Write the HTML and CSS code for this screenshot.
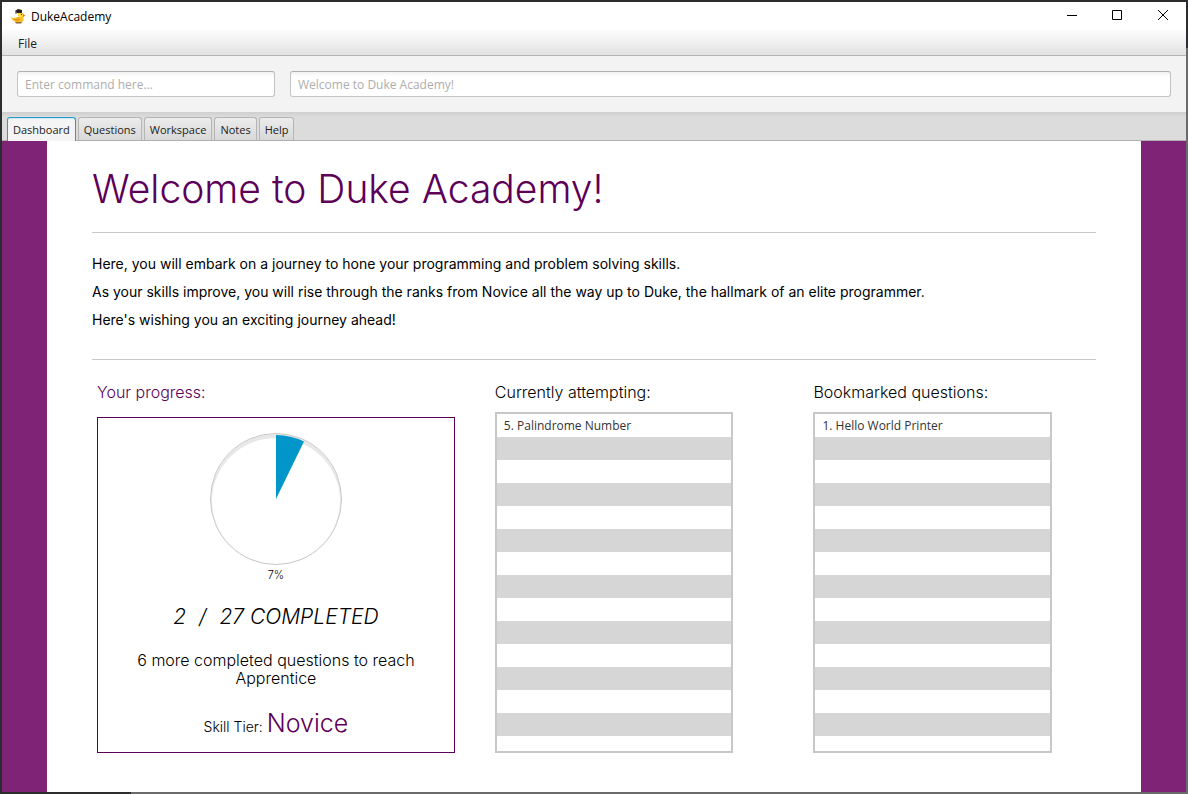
FILE: index.html
```html
<!DOCTYPE html>
<html lang="en">
<head>
<meta charset="utf-8">
<title>DukeAcademy</title>
<link rel="stylesheet" href="styles.css">
</head>
<body>
<div class="window">
  <header class="titlebar">
    <svg class="duck" viewBox="0 0 15 15" aria-hidden="true">
      <path d="M0 8L2 9Q4 9 6 8L8 8Q6 6 7 4L12 4Q14 6 12 9Q14 11 11 13L5 13Q1 12 0 8Z" fill="#f6bd2c"/>
      <path d="M2 10Q5 11 8 9L9 11Q6 13 3 11Z" fill="#e89613"/>
      <path d="M7 5Q10 3 12 6L11 8L8 8Z" fill="#ffe23b"/>
      <path d="M12 5.500L14.500 6.500L12 8Z" fill="#ed6a10"/>
      <path d="M4 13L11 13L10 14.500L5 14.500Z" fill="#8d6b39"/>
      <path d="M4 2L7 0L11 1L11 4L6 4Z" fill="#252323"/>
      <path d="M5 2L5 5" stroke="#553b2b"/>
      <rect x="10" y="5" width="1" height="1" fill="#34240e"/>
    </svg>
    <h1 class="app-name">DukeAcademy</h1>
    <div class="win-controls">
      <button class="win-btn" aria-label="Minimize"><svg viewBox="0 0 10 10"><path d="M1 5.500H11"/></svg></button>
      <button class="win-btn" aria-label="Maximize"><svg viewBox="0 0 10 10"><path d="M.5 .5H9.500V9.500H.5Z"/></svg></button>
      <button class="win-btn" aria-label="Close"><svg viewBox="0 0 10 10"><path d="M0 0L10 10M10 0L0 10"/></svg></button>
    </div>
  </header>
  <nav class="menubar"><button class="menu-item">File</button></nav>
  <div class="commands">
    <input class="field command" type="text" aria-label="Command" placeholder="Enter command here...">
    <input class="field result" type="text" aria-label="Result" placeholder="Welcome to Duke Academy!" readonly>
  </div>
  <div class="tabs" role="tablist">
    <button class="tab active" role="tab" aria-selected="true">Dashboard</button>
    <button class="tab" role="tab" aria-selected="false">Questions</button>
    <button class="tab" role="tab" aria-selected="false">Workspace</button>
    <button class="tab" role="tab" aria-selected="false">Notes</button>
    <button class="tab" role="tab" aria-selected="false">Help</button>
  </div>
  <main class="dashboard">
    <h2 class="welcome">Welcome to Duke Academy!</h2>
    <div class="intro">
      <p>Here, you will embark on a journey to hone your programming and problem solving skills.</p>
      <p>As your skills improve, you will rise through the ranks from Novice all the way up to Duke, the hallmark of an elite programmer.</p>
      <p>Here's wishing you an exciting journey ahead!</p>
    </div>
    <div class="columns">
      <section class="column progress">
        <h3 class="heading accent">Your progress:</h3>
        <div class="card">
          <svg class="pie" viewBox="0 0 132 132" role="img" aria-label="7% completed">
            <circle cx="66" cy="66" r="65" fill="#e8e8e8"/>
            <ellipse cx="66" cy="68" rx="64" ry="63" fill="#fff"/>
            <circle cx="66" cy="66" r="65.500" fill="none" stroke="#c8c8c8"/>
            <path d="M66 66V2A64 64 0 0 1 94 8.500Z" fill="#0096c9"/>
          </svg>
          <span class="percent">7%</span>
          <p class="completed"><span>2</span><span>/</span><span>27 COMPLETED</span></p>
          <p class="next">6 more completed questions to reach Apprentice</p>
          <p class="tier">Skill Tier: <strong class="tier-name">Novice</strong></p>
        </div>
      </section>
      <section class="column attempting">
        <h3 class="heading">Currently attempting:</h3>
        <ul class="list"><li>5. Palindrome Number</li></ul>
      </section>
      <section class="column bookmarked">
        <h3 class="heading">Bookmarked questions:</h3>
        <ul class="list"><li>1. Hello World Printer</li></ul>
      </section>
    </div>
  </main>
</div>
</body>
</html>
```
FILE: styles.css
```css
* { box-sizing: border-box; margin: 0; padding: 0; }
body {
  display: flex;
  flex-direction: column;
  min-height: 100vh;
  padding: 2px;
  background:
    linear-gradient(#2d2d2f, #2d2d2f) 0 0 / 100% 48px no-repeat,
    linear-gradient(#2d2d2f, #2d2d2f) 0 0 / 131px 100% no-repeat,
    #6b6b6b;
  color: #000;
  font-family: "Open Sans", "Noto Sans", sans-serif;
  font-size: 12px;
}
button, input { font: inherit; color: inherit; }
.window { display: flex; flex: 1; flex-direction: column; background: #fff; }
.titlebar { display: flex; align-items: center; height: 28px; padding-left: 9px; }
.duck { width: 15px; height: 15px; margin-right: 5px; }
.app-name { flex: 1; font-size: 12px; font-weight: 400; }
.win-controls { display: flex; align-self: flex-start; }
.win-btn { display: grid; place-items: center; width: 46px; height: 26px; border: 0; background: none; }
.win-btn svg { width: 10px; height: 10px; overflow: visible; fill: none; stroke: #000; }
.menubar {
  height: 26px;
  padding-left: 8px;
  border-bottom: 1px solid #b5b5b5;
  background: linear-gradient(#fdfdfd, #e2e2e2);
}
.menu-item { height: 25px; padding: 2px 8px 0; border: 0; background: none; color: #222; }
.commands { display: flex; align-items: center; gap: 15px; height: 56px; padding: 0 15px; background: #f3f3f3; }
.field {
  height: 26px;
  min-width: 0;
  padding: 0 7px;
  border: 1px solid #c4c4c4;
  border-top-color: #b0b0b0;
  border-radius: 3px;
  background: linear-gradient(#f2f2f2, #fff 5px);
}
.field::placeholder { color: #aeaeae; opacity: 1; }
.command { flex: 0 0 258px; }
.result { flex: 1; }
.tabs {
  display: flex;
  align-items: flex-end;
  gap: 2px;
  height: 29px;
  padding-left: 5px;
  border-bottom: 1px solid #b0b0b0;
  background: linear-gradient(#cfcfcf, #dcdcdc 5px);
}
.tab {
  height: 23px;
  padding: 0 5px;
  border: 1px solid #b5b5b5;
  border-bottom: 0;
  border-radius: 3px 3px 0 0;
  background: linear-gradient(#ececec, #d8d8d8);
  color: #222;
  font-size: 11px;
  white-space: nowrap;
}
.tab.active {
  height: 24px;
  margin-bottom: -1px;
  border-color: #279dcc;
  background: #f4f4f4;
  box-shadow: inset 0 1px 1px #cfe6f1;
}
.dashboard {
  display: flex;
  flex: 1;
  flex-direction: column;
  padding: 0 45px 39px;
  border: solid #7f2377;
  border-width: 0 45px;
  font-family: Inter, sans-serif;
  font-weight: 300;
}
.welcome {
  padding: 24px 0 20px;
  color: #5c0058;
  font-size: 39px;
  font-weight: 300;
  line-height: 47px;
}
.intro {
  padding: 17px 0 25px;
  border: solid #c8c8c8;
  border-width: 1px 0;
  font-size: 14px;
  font-weight: 400;
  line-height: 28px;
}
.columns { display: flex; flex: 1; padding: 20px 44px 0 5px; }
.column { display: flex; flex-direction: column; min-width: 0; }
.progress { flex: 3; margin-right: 40px; }
.attempting { flex: 2; margin-right: 80px; }
.bookmarked { flex: 2; }
.heading { margin-bottom: 8px; font-size: 16px; font-weight: 300; line-height: 24px; white-space: nowrap; }
.accent { margin-bottom: 13px; color: #5c0058; }
.card {
  display: flex;
  flex: 1;
  flex-direction: column;
  align-items: center;
  padding: 15px 24px 0;
  border: 1px solid #5c0058;
  text-align: center;
}
.pie { width: 132px; height: 132px; }
.percent { margin-bottom: 18px; font-size: 11px; line-height: 20px; }
.completed { display: flex; gap: 13px; margin-bottom: 20px; font-size: 21px; font-style: italic; line-height: 28px; }
.next { margin-bottom: 20px; font-size: 16px; line-height: 18px; }
.tier { font-size: 14px; line-height: 32px; }
.tier-name { color: #5c0058; font-size: 25px; font-weight: 300; }
.list {
  flex: 1;
  border: 2px solid #c8c8c8;
  background: repeating-linear-gradient(#fff 0 23px, #d6d6d6 23px 46px);
  background-clip: padding-box;
  color: #333;
  font-family: "Open Sans", "Noto Sans", sans-serif;
  font-weight: 400;
  list-style: none;
}
.list li { height: 23px; padding-left: 7px; line-height: 23px; }
```
